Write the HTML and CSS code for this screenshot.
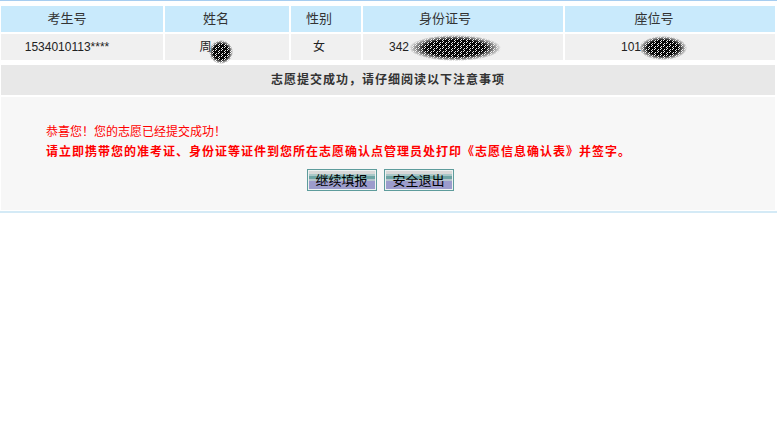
FILE: index.html
```html
<!DOCTYPE html>
<html lang="zh-CN">
<head>
    <meta charset="UTF-8">
    <title>志愿提交成功</title>
    <link rel="stylesheet" href="styles.css">
</head>
<body>
    <div class="page">
        <div class="info-grid head">
            <div class="cell c1">考生号</div>
            <div class="cell c2">姓名</div>
            <div class="cell c3">性别</div>
            <div class="cell c4">身份证号</div>
            <div class="cell c5">座位号</div>
        </div>
        <div class="info-grid data">
            <div class="cell c1">1534010113****</div>
            <div class="cell c2">周<span class="blot blot-name"></span></div>
            <div class="cell c3">女</div>
            <div class="cell c4">342<span class="blot blot-id"></span></div>
            <div class="cell c5">101<span class="blot blot-seat"></span></div>
        </div>

        <div class="notice-title">志愿提交成功，请仔细阅读以下注意事项</div>
        <div class="notice-body">
            <p class="msg">恭喜您！您的志愿已经提交成功！</p>
            <p class="msg strong">请立即携带您的准考证、身份证等证件到您所在志愿确认点管理员处打印《志愿信息确认表》并签字。</p>
            <div class="actions">
                <button class="btn">继续填报</button>
                <button class="btn">安全退出</button>
            </div>
        </div>
        <div class="bottom-line"></div>
    </div>
</body>
</html>
```

FILE: styles.css
```css
body, html {
    margin: 0;
    padding: 0;
    background-color: #fff;
    font-family: "Liberation Sans", "Noto Sans CJK SC", sans-serif;
    font-size: 12px;
    color: #333;
}
.page {
    border-top: 1px solid #a6cdf0;
    padding-top: 5px;
}
.info-grid {
    display: grid;
    grid-template-columns: 162px 124px 70px 200px 1fr;
    gap: 2px;
    padding: 0 2px 0 1px;
    margin-bottom: 2px;
}
.cell {
    height: 26px;
    line-height: 26px;
    text-align: center;
    white-space: nowrap;
    overflow: visible;
}
.head .cell {
    background-color: #c9eafc;
    font-size: 13px;
}
.data .cell {
    background-color: #f0f0f0;
    color: #222;
}
.c1 { padding-right: 30px; }
.c2 { padding-right: 22px; }
.c3 { padding-right: 14px; }
.c4 { padding-right: 36px; }
.c5 { padding-right: 32px; }

.blot {
    display: inline-block;
    vertical-align: middle;
    margin-top: -8px;
    margin-bottom: -8px;
    background:
        repeating-conic-gradient(#000 0 25%, transparent 0 50%) 0 0 / 2px 2px,
        repeating-conic-gradient(#111 0 25%, transparent 0 50%) 1px 0 / 3px 3px;
    -webkit-mask-image: radial-gradient(closest-side, #000 65%, transparent 100%);
    mask-image: radial-gradient(closest-side, #000 65%, transparent 100%);
}
.blot-name {
    width: 24px;
    height: 24px;
    margin-left: -3px;
    margin-top: -2px;
    margin-bottom: -10px;
}
.blot-id {
    width: 92px;
    height: 26px;
    margin-left: 0;
}
.blot-seat {
    width: 48px;
    height: 24px;
    margin-left: -2px;
}

.notice-title {
    margin: 5px 2px 0 1px;
    height: 30px;
    line-height: 30px;
    background-color: #e8e8e8;
    text-align: center;
    font-weight: bold;
    letter-spacing: 1px;
    color: #333;
}
.notice-body {
    margin: 2px 2px 0 1px;
    background-color: #f7f7f7;
    padding: 25px 0 19px 45px;
}
.msg {
    margin: 0;
    line-height: 20px;
    color: #ff0000;
}
.msg.strong {
    font-weight: bold;
    letter-spacing: 1px;
}
.actions {
    display: flex;
    justify-content: center;
    gap: 7px;
    margin-top: 7px;
    padding-right: 61px;
}
.btn {
    width: 70px;
    height: 22px;
    padding: 0;
    border: 1px solid #5e9c9c;
    box-shadow: inset 0 0 0 1px #eef2f2;
    font-family: "Noto Sans CJK SC", sans-serif;
    font-size: 13px;
    line-height: 18px;
    color: #000;
    cursor: pointer;
    background: linear-gradient(to bottom,
        #d8d8d8 0, #d8d8d8 4px,
        #a8c8c8 4px, #a8c8c8 6px,
        #6ea4a4 6px, #6ea4a4 9px,
        #b4c4cc 9px, #b4c4cc 11px,
        #9c9ccc 11px, #9c9ccc 100%);
}
.bottom-line {
    margin-top: 1px;
    height: 2px;
    background-color: #d4eaf6;
}
```
